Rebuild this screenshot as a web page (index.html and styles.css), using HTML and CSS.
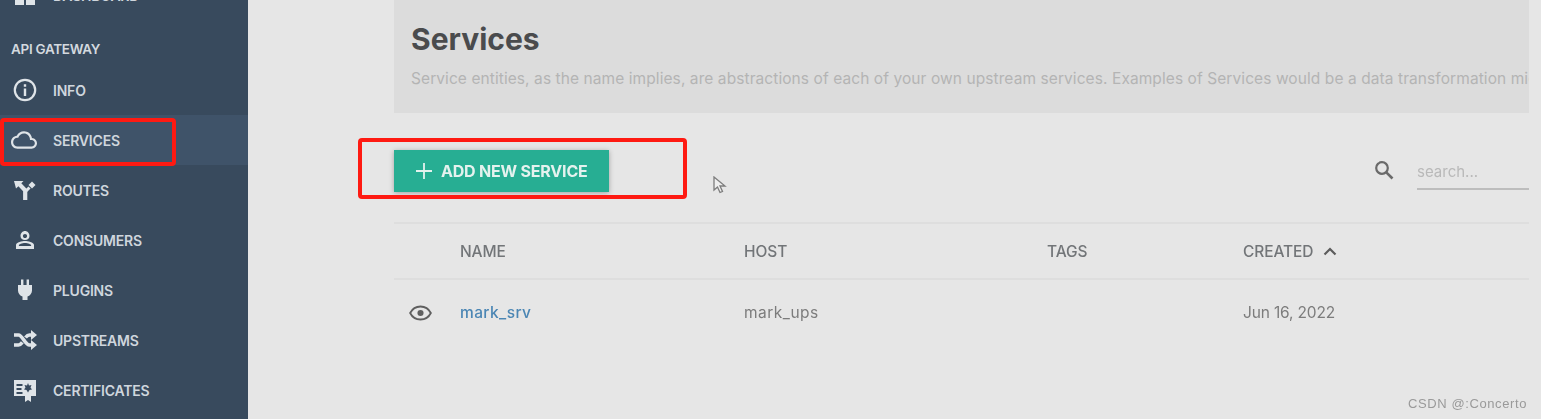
FILE: index.html
```html
<!DOCTYPE html>
<html lang="en">
<head>
<meta charset="utf-8">
<title>Services</title>
<link rel="stylesheet" href="styles.css">
</head>
<body>
<div class="page">
  <aside class="sidebar">
    <nav class="nav">
      <a class="item"><svg class="ic" viewBox="0 0 24 24"><path fill="currentColor" d="M2 2h9v9H2zM13 2h9v9h-9zM2 13h9v9H2zM13 13h9v9h-9z"/></svg><span>DASHBOARD</span></a>
      <div class="section">API GATEWAY</div>
      <a class="item"><svg class="ic" viewBox="0 0 24 24"><circle cx="12" cy="12" r="10.2" fill="none" stroke="currentColor" stroke-width="2.2"/><path fill="currentColor" d="M10.8 10.5h2.4V18h-2.4zM10.8 6.2h2.4v2.6h-2.4z"/></svg><span>INFO</span></a>
      <a class="item active"><svg class="ic cloud" viewBox="0 0 24 24"><path fill="currentColor" d="M19.35 10.04C18.67 6.59 15.64 4 12 4 9.11 4 6.6 5.64 5.35 8.04 2.34 8.36 0 10.91 0 14c0 3.31 2.69 6 6 6h13c2.76 0 5-2.24 5-5 0-2.64-2.05-4.78-4.65-4.96zM19 18H6c-2.21 0-4-1.79-4-4s1.79-4 4-4h.71C7.37 7.69 9.48 6 12 6c3.04 0 5.5 2.46 5.5 5.5v.5H19c1.66 0 3 1.34 3 3s-1.34 3-3 3z"/></svg><span>SERVICES</span></a>
      <a class="item"><svg class="ic" viewBox="0 0 24 24"><path fill="currentColor" d="M1 3h9.5L8.3 5.2l6 6.3V22h-4.2v-8.8L5.4 8.2 3 10.600z"/><path fill="currentColor" d="M19 3.500l3.500 3.500-3.500 3.500L15.500 7z"/><path fill="none" stroke="currentColor" stroke-width="3" d="M12.500 13.500l4-4"/></svg><span>ROUTES</span></a>
      <a class="item"><svg class="ic" viewBox="0 0 24 24"><path fill="currentColor" d="M12 5.900c1.160 0 2.100.940 2.100 2.100s-.940 2.100-2.100 2.100S9.900 9.160 9.900 8s.940-2.100 2.100-2.100m0 9c2.970 0 6.100 1.460 6.100 2.100v1.100H5.900V17c0-.640 3.130-2.100 6.100-2.100M12 3C9.500 3 7.500 5.300 7.500 8s2 4 4.500 4 4.500-1.300 4.500-4S14.500 3 12 3zm0 10c-2.670 0-9 1.340-9 4v4h18v-4c0-2.660-6.330-4-9-4z"/></svg><span>CONSUMERS</span></a>
      <a class="item"><svg class="ic" viewBox="0 0 24 24"><path fill="currentColor" d="M8 1.500h2.400V7h3.200V1.500H16V7h3v5.500c0 3-2 5.200-4.500 6V22h-5v-3.500C7 17.700 5 15.500 5 12.500V7h3z"/></svg><span>PLUGINS</span></a>
      <a class="item"><svg class="ic" viewBox="0 0 24 24"><path fill="none" stroke="currentColor" stroke-width="3.600" d="M1 7h4.500c4 0 6.500 10 11 10H19M1 17h4.500c1.500 0 2.700-1.200 3.800-2.600M12.500 9.500C13.700 8 15 7 16.500 7H19"/><path fill="currentColor" d="M18 2l6 5-6 5zM18 12l6 5-6 5z"/></svg><span>UPSTREAMS</span></a>
      <a class="item"><svg class="ic" viewBox="0 0 24 24"><path fill="currentColor" fill-rule="evenodd" d="M1 2h22v16h-5v6l-3-2-3 2v-6H1zM3.500 6v2h6V6zm0 4v2h5v-2zm0 4v2h6v-2zM15 5l-1 2.500-2.500-.500 1 2.500-1.500 2 2.500.500 1.500 2.500 1.500-2.500 2.500-.500-1.500-2 1-2.500-2.500.500z"/></svg><span>CERTIFICATES</span></a>
    </nav>
  </aside>
  <main class="main">
    <header class="hero">
      <h1>Services</h1>
      <p>Service entities, as the name implies, are abstractions of each of your own upstream services. Examples of Services would be a data transformation microservice, a billing API, etc.</p>
    </header>
    <div class="toolbar">
      <button class="add"><svg class="plus" viewBox="0 0 16 16"><path fill="none" stroke="currentColor" stroke-width="1.800" d="M8 0v16M0 8h16"/></svg><span>ADD NEW SERVICE</span></button>
      <div class="search">
        <svg class="mag" viewBox="0 0 20 20"><circle cx="8" cy="8" r="5.800" fill="none" stroke="currentColor" stroke-width="2.200"/><path fill="none" stroke="currentColor" stroke-width="2.600" d="M12.300 12.300l6.200 6.200"/></svg>
        <div class="field">search...</div>
      </div>
    </div>
    <div class="table">
      <div class="row head">
        <div></div>
        <div>NAME</div>
        <div>HOST</div>
        <div>TAGS</div>
        <div class="sort">CREATED<svg class="chev" viewBox="0 0 14 9"><path fill="none" stroke="currentColor" stroke-width="2.200" d="M1.500 7.500L7 2l5.500 5.500"/></svg></div>
      </div>
      <div class="row body">
        <div class="eye-cell"><svg class="eye" viewBox="0 0 24 16"><path fill="none" stroke="currentColor" stroke-width="1.900" d="M1.200 8C3.500 3.500 7.500 1.200 12 1.200S20.500 3.500 22.800 8C20.500 12.500 16.500 14.800 12 14.800S3.500 12.500 1.200 8z"/><circle cx="12" cy="8" r="3.200" fill="currentColor"/></svg></div>
        <div class="link">mark_srv</div>
        <div class="host">mark_ups</div>
        <div></div>
        <div class="date">Jun 16, 2022</div>
      </div>
    </div>
  </main>
  <svg class="cursor" viewBox="0 0 14 18"><path fill="#eeeeee" stroke="#7d7d7d" stroke-width="1.300" d="M1 1v13l3.500-3 2.500 5.500 2.500-1-2.500-5.500H12z"/></svg>
  <div class="mark mark-services"></div>
  <div class="mark mark-add"></div>
</div>
<div class="watermark">CSDN @:Concerto</div>
</body>
</html>
```
FILE: styles.css
```css
* { box-sizing: border-box; }
html, body { margin: 0; height: 100%; overflow: hidden; background: #e6e6e6; }
body { font-family: Inter, "Open Sans", sans-serif; position: relative; }
.page { position: relative; display: flex; height: 419px; filter: blur(0.45px); }

.sidebar { width: 248px; flex: none; background: #384a5d; overflow: hidden; }
.nav { margin-top: -30px; display: flex; flex-direction: column; }
.item { display: flex; align-items: center; height: 50px; flex: none; padding-left: 13px; gap: 16px; font-size: 14px; font-weight: 600; letter-spacing: -0.2px; color: #cfd6dd; }
.item.active { background: #3f5369; }
.section { height: 45px; flex: none; padding: 21px 0 0 11px; font-size: 13.500px; font-weight: 600; letter-spacing: -0.3px; line-height: 16px; color: #d3d9df; }
.ic { width: 24px; height: 24px; flex: none; color: #dfe4e8; }
.cloud { width: 26px; height: 26px; margin-left: -2px; }

.main { flex: 1; min-width: 0; padding: 0 12px 0 146px; }
.hero { height: 113px; background: #dcdcdc; padding: 21px 17px 0; overflow: hidden; }
.hero h1 { margin: 0; font-size: 30px; line-height: 36px; font-weight: 700; color: #4a4b4d; }
.hero p { margin: 12px 0 0; font-size: 15.500px; line-height: 20px; letter-spacing: 0.08px; white-space: nowrap; color: #b4b4b4; }

.toolbar { height: 111px; display: flex; align-items: flex-start; justify-content: space-between; padding-top: 37px; border-bottom: 2px solid #dedede; }
.add { display: flex; align-items: center; gap: 9px; width: 215px; height: 42px; padding: 0 0 0 22px; border: 0; background: #27ae93; color: #e4f2ee; font: 700 16px Inter, sans-serif; letter-spacing: -0.2px; box-shadow: 0 1px 5px rgba(0, 0, 0, 0.3); }
.plus { width: 16px; height: 16px; }
.search { display: flex; gap: 23px; align-items: flex-start; padding-top: 10px; width: 155px; }
.mag { width: 20px; height: 20px; color: #6a6a6a; flex: none; }
.field { flex: 1; height: 30px; padding-top: 3px; font-size: 15px; line-height: 18px; color: #b9b9b9; border-bottom: 2px solid #bdbdbd; }

.row { display: grid; grid-template-columns: 66px 284px 303px 196px 1fr; align-items: center; font-size: 15.500px; color: #7c7c7c; }
.head { height: 56px; border-bottom: 2px solid #dedede; font-weight: 500; letter-spacing: -0.1px; color: #727578; }
.body { height: 65px; }
.sort { display: flex; align-items: center; gap: 10px; }
.chev { width: 14px; height: 9px; color: #5c5c5c; }
.eye-cell { padding-left: 15px; display: flex; }
.eye { width: 23px; height: 16px; color: #5f5f5f; }
.link { color: #4b86b4; font-weight: 500; letter-spacing: 0.4px; }
.host { letter-spacing: 0.5px; }
.date { letter-spacing: -0.15px; }

.cursor { position: absolute; left: 713px; top: 176px; width: 14px; height: 18px; }
.mark { position: absolute; border: 4px solid #fe1a12; border-radius: 4px; }
.mark-services { left: 0; top: 118px; width: 176px; height: 48px; }
.mark-add { left: 358px; top: 138px; width: 329px; height: 61px; }
.watermark { position: absolute; left: 1408px; top: 396px; font: 13px "Liberation Sans", sans-serif; letter-spacing: 0.6px; color: #9a9a9a; }
```
